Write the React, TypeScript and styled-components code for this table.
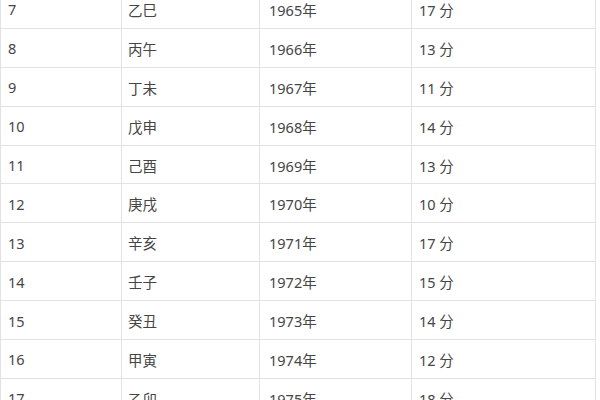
import React from "react";
import styled, { createGlobalStyle } from "styled-components";

const GlobalStyle = createGlobalStyle`
  html, body {
    margin: 0;
    padding: 0;
    background: #fff;
  }
  body {
    font-family: "Noto Sans", "Noto Sans CJK SC", sans-serif;
  }
`;

const Viewport = styled.div`
  width: 600px;
  height: 400px;
  overflow: hidden;
`;

const Table = styled.table`
  margin-top: -11px;
  border-collapse: collapse;
  table-layout: fixed;
  width: 595px;
  color: #454545;
  font-size: 14.5px;
`;

const Cell = styled.td<{ $pad: number }>`
  height: 38.9px;
  box-sizing: border-box;
  padding: 1px 0 0 ${p => p.$pad}px;
  border: 1px solid #e2e2e2;
  vertical-align: middle;
  white-space: nowrap;
`;

const rows: [string, string, string, string][] = [
  ["7", "乙巳", "1965年", "17 分"],
  ["8", "丙午", "1966年", "13 分"],
  ["9", "丁未", "1967年", "11 分"],
  ["10", "戊申", "1968年", "14 分"],
  ["11", "己酉", "1969年", "13 分"],
  ["12", "庚戌", "1970年", "10 分"],
  ["13", "辛亥", "1971年", "17 分"],
  ["14", "壬子", "1972年", "15 分"],
  ["15", "癸丑", "1973年", "14 分"],
  ["16", "甲寅", "1974年", "12 分"],
  ["17", "乙卯", "1975年", "18 分"],
];

const widths = [121, 138, 152, 184];
const pads = [7, 6, 9, 7];

export default function App() {
  return (
    <Viewport>
      <GlobalStyle />
      <Table>
        <colgroup>
          {widths.map((w, i) => (
            <col key={i} style={{ width: w }} />
          ))}
        </colgroup>
        <tbody>
          {rows.map(r => (
            <tr key={r[0]}>
              {r.map((c, i) => (
                <Cell key={i} $pad={pads[i]}>
                  {c}
                </Cell>
              ))}
            </tr>
          ))}
        </tbody>
      </Table>
    </Viewport>
  );
}
